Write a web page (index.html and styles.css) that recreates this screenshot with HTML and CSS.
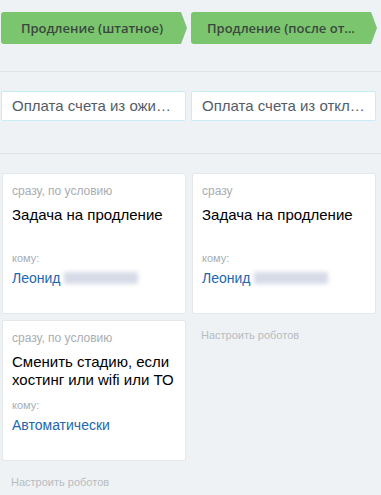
FILE: index.html
```html
<!DOCTYPE html>
<html>
<head>
    <title>Роботы</title>
    <link rel="stylesheet" href="styles.css">
</head>
<body>
    <div class="row stages">
        <div class="col"><div class="stage">Продление (штатное)</div></div>
        <div class="col"><div class="stage">Продление (после отключения)</div></div>
    </div>

    <div class="row triggers">
        <div class="col"><div class="trigger">Оплата счета из ожидания</div></div>
        <div class="col"><div class="trigger">Оплата счета из отключения</div></div>
    </div>

    <div class="row robots">
        <div class="col">
            <div class="card">
                <div class="when">сразу, по условию</div>
                <div class="title">Задача на продление</div>
                <div class="who">кому:</div>
                <div class="user">Леонид <span class="blur"></span></div>
            </div>
            <div class="card">
                <div class="when">сразу, по условию</div>
                <div class="title">Сменить стадию, если хостинг или wifi или ТО</div>
                <div class="who">кому:</div>
                <div class="user">Автоматически</div>
            </div>
            <div class="setup">Настроить роботов</div>
        </div>
        <div class="col">
            <div class="card">
                <div class="when">сразу</div>
                <div class="title">Задача на продление</div>
                <div class="who">кому:</div>
                <div class="user">Леонид <span class="blur"></span></div>
            </div>
            <div class="setup">Настроить роботов</div>
        </div>
    </div>
</body>
</html>
```

FILE: styles.css
```css
body {
    margin: 0;
    background: #eef2f4;
    font-family: Arial, "Liberation Sans", sans-serif;
}
.row {
    display: grid;
    grid-template-columns: 190px 190px;
}
.stages {
    padding: 12px 0 27px;
    border-bottom: 1px solid #dfe3e6;
}
.stage {
    margin-left: 1px;
    width: 186px;
    height: 32px;
    box-sizing: border-box;
    padding: 0 20px 0 16px;
    background: #7bc56e;
    border-radius: 3px;
    clip-path: polygon(0 0, calc(100% - 6px) 0, 100% 50%, calc(100% - 6px) 100%, 0 100%);
    font-family: "Open Sans", sans-serif;
    font-weight: 600;
    font-size: 13px;
    line-height: 32px;
    color: #3a4840;
    text-align: center;
    white-space: nowrap;
    overflow: hidden;
    text-overflow: ellipsis;
}
.triggers {
    padding: 19px 0 32px;
    border-bottom: 1px solid #dfe3e6;
}
.trigger {
    margin-left: 1px;
    width: 185px;
    height: 30px;
    box-sizing: border-box;
    padding: 0 10px;
    background: #fff;
    border: 1px solid #c6eef6;
    border-radius: 2px;
    font-size: 15px;
    line-height: 28px;
    color: #535c69;
    white-space: nowrap;
    overflow: hidden;
    text-overflow: ellipsis;
}
.robots {
    padding-top: 19px;
    align-items: start;
}
.card {
    margin: 0 0 6px 2px;
    width: 184px;
    height: 141px;
    box-sizing: border-box;
    padding: 10px 9px 0;
    background: #fff;
    border: 1px solid #e4e8ea;
    border-radius: 2px;
}
.when {
    font-size: 12px;
    color: #a8adb4;
    line-height: 14px;
}
.title {
    margin-top: 8px;
    font-size: 15px;
    line-height: 18px;
    color: #000;
    height: 40px;
}
.who {
    margin-top: 6px;
    font-size: 11px;
    color: #a8adb4;
    line-height: 13px;
}
.user {
    margin-top: 5px;
    font-size: 14px;
    line-height: 16px;
    color: #2067b0;
}
.blur {
    display: inline-block;
    width: 74px;
    height: 12px;
    vertical-align: -1px;
    background: #d7dbe8;
    filter: blur(2px);
}
.setup {
    margin: 15px 0 0 11px;
    font-size: 11px;
    line-height: 13px;
    color: #b7bcc2;
}
```
